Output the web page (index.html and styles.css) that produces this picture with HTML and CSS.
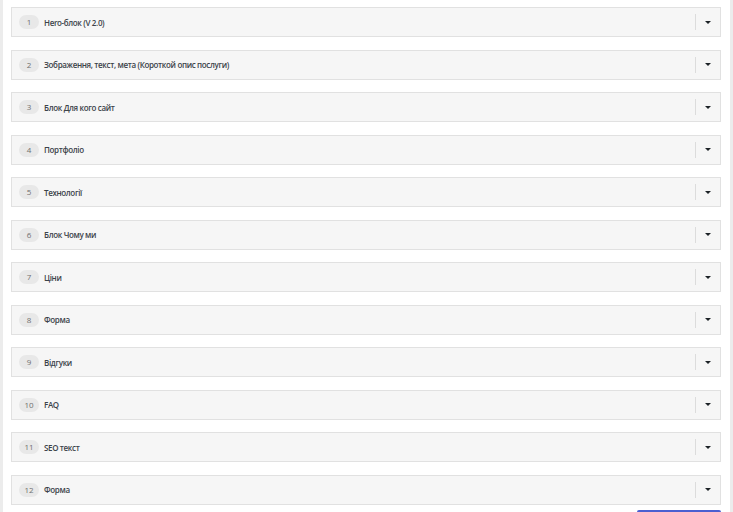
FILE: index.html
```html
<!DOCTYPE html>
<html lang="uk">
<head>
    <meta charset="UTF-8">
    <title>Блоки сторінки</title>
    <link rel="stylesheet" href="styles.css">
</head>
<body>
    <div class="layout">
        <div class="side-strip"></div>
        <div class="blocks">
            <div class="block"><span class="block-num">1</span><span class="block-title">Hero-блок (V 2.0)</span><span class="block-toggle"><span class="caret"></span></span></div>
            <div class="block"><span class="block-num">2</span><span class="block-title">Зображення, текст, мета (Короткой опис послуги)</span><span class="block-toggle"><span class="caret"></span></span></div>
            <div class="block"><span class="block-num">3</span><span class="block-title">Блок Для кого сайт</span><span class="block-toggle"><span class="caret"></span></span></div>
            <div class="block"><span class="block-num">4</span><span class="block-title">Портфоліо</span><span class="block-toggle"><span class="caret"></span></span></div>
            <div class="block"><span class="block-num">5</span><span class="block-title">Технології</span><span class="block-toggle"><span class="caret"></span></span></div>
            <div class="block"><span class="block-num">6</span><span class="block-title">Блок Чому ми</span><span class="block-toggle"><span class="caret"></span></span></div>
            <div class="block"><span class="block-num">7</span><span class="block-title">Ціни</span><span class="block-toggle"><span class="caret"></span></span></div>
            <div class="block"><span class="block-num">8</span><span class="block-title">Форма</span><span class="block-toggle"><span class="caret"></span></span></div>
            <div class="block"><span class="block-num">9</span><span class="block-title">Відгуки</span><span class="block-toggle"><span class="caret"></span></span></div>
            <div class="block"><span class="block-num">10</span><span class="block-title">FAQ</span><span class="block-toggle"><span class="caret"></span></span></div>
            <div class="block"><span class="block-num">11</span><span class="block-title">SEO текст</span><span class="block-toggle"><span class="caret"></span></span></div>
            <div class="block"><span class="block-num">12</span><span class="block-title">Форма</span><span class="block-toggle"><span class="caret"></span></span></div>
            <div class="actions"><button class="add-btn"></button></div>
        </div>
        <div class="side-strip"></div>
    </div>
</body>
</html>
```

FILE: styles.css
```css
body { margin: 0; background: #fff; font-family: "Open Sans", Arial, sans-serif; overflow: hidden; }
.layout { display: flex; height: 512px; }
.side-strip { width: 3px; background: #ececec; flex-shrink: 0; }
.blocks { flex: 1; padding: 7px 9px 0 8px; display: flex; flex-direction: column; gap: 12.5px; }
.block {
    display: flex;
    align-items: center;
    height: 30px;
    box-sizing: border-box;
    background: #f6f6f6;
    border: 1px solid #e1e1e1;
    padding-left: 7px;
    flex-shrink: 0;
}
.block-num {
    width: 20px;
    height: 14px;
    line-height: 14px;
    border-radius: 7px;
    background: #e8e8e8;
    color: #6f6f6f;
    font-size: 8px;
    text-align: center;
    margin-right: 5px;
}
.block-title { flex: 1; font-size: 8px; font-weight: 600; letter-spacing: -0.35px; color: #3c434a; }
.block-toggle {
    width: 23px;
    height: 16px;
    margin-right: 1px;
    border-left: 1px solid #dcdcdc;
    display: flex;
    align-items: center;
    justify-content: center;
}
.caret {
    width: 0; height: 0;
    border-left: 3px solid transparent;
    border-right: 3px solid transparent;
    border-top: 3.5px solid #1d2327;
}
.actions { display: flex; justify-content: flex-end; margin-top: -7px; }
.add-btn { width: 84px; height: 20px; background: #4b5fd1; border: none; border-radius: 2px; }
```
